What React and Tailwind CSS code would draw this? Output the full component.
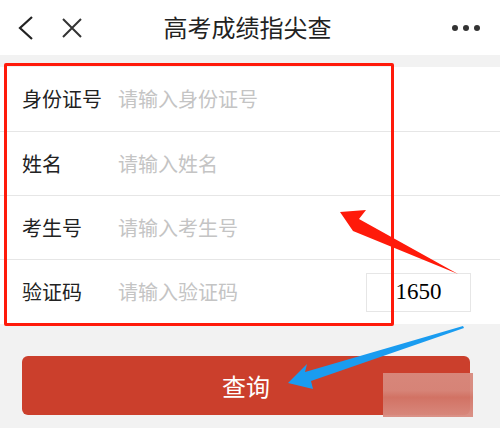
import React from "react";

const rows = [
  { label: "身份证号", placeholder: "请输入身份证号" },
  { label: "姓名", placeholder: "请输入姓名" },
  { label: "考生号", placeholder: "请输入考生号" },
  { label: "验证码", placeholder: "请输入验证码", captcha: "1650" },
];

const App = () => {
  return (
    <div
      className="relative w-[500px] h-[428px] overflow-hidden bg-[#f2f2f2]"
      style={{ fontFamily: '"Noto Sans CJK SC", "Noto Sans", sans-serif' }}
    >
      {/* header */}
      <div className="h-[55px] bg-white flex items-center px-[16px]">
        <svg width="18" height="26" viewBox="0 0 18 26" className="ml-[1px]">
          <path d="M15 2 L3 13 L15 24" fill="none" stroke="#222" strokeWidth="2.2" />
        </svg>
        <svg width="22" height="22" viewBox="0 0 22 22" className="ml-[26px]">
          <path d="M2 2 L20 20 M20 2 L2 20" fill="none" stroke="#333" strokeWidth="2" />
        </svg>
        <div className="flex-1 text-center text-[24px] text-[#222] pr-[40px] -mt-[2px]">
          高考成绩指尖查
        </div>
        <div className="flex gap-[5px] mr-[4px]">
          <span className="w-[6px] h-[6px] rounded-full bg-[#333]" />
          <span className="w-[6px] h-[6px] rounded-full bg-[#333]" />
          <span className="w-[6px] h-[6px] rounded-full bg-[#333]" />
        </div>
      </div>

      {/* form */}
      <div className="mt-[12px] bg-white">
        {rows.map((r, i) => (
          <div
            key={r.label}
            className={`flex items-center ${i === 0 ? "h-[65px]" : "h-[64px]"} ${
              i < rows.length - 1 ? "border-b border-[#e6e6e6]" : ""
            }`}
          >
            <div className="w-[118px] pl-[22px] text-[20px] text-[#222] shrink-0">{r.label}</div>
            <div className="flex-1 text-[20px] text-[#c4c4c4]">{r.placeholder}</div>
            {r.captcha && (
              <div
                className="w-[105px] h-[39px] mr-[29px] border border-[#e6e6e6] flex items-center justify-center text-[23px] text-black"
                style={{ fontFamily: '"Liberation Serif", serif' }}
              >
                {r.captcha}
              </div>
            )}
          </div>
        ))}
      </div>

      {/* button */}
      <div className="mt-[32px] mx-[22px] w-[448px] h-[59px] rounded-[6px] bg-[#cb3f2c] flex items-center justify-center text-white text-[24px]">
        查询
      </div>

      {/* red highlight box */}
      <div className="absolute left-[4px] top-[63px] w-[390px] h-[263px] border-[3px] border-[#ff1a0a] rounded-[2px]" />

      {/* mosaic */}
      <div className="absolute left-[383px] top-[373px] w-[90px] h-[44px] bg-[linear-gradient(180deg,#d88a7e,#d7877b_40%,#d27567_55%,#d98d82)] opacity-95" />

      {/* arrows */}
      <svg className="absolute left-0 top-0" width="500" height="428" viewBox="0 0 500 428">
        <path d="M340 212 L366 210 L359 219 L458 274 L353 231 Z" fill="#ff1a0a" />
        <path d="M288 383 L307 364 L305 372 L463 326 L464 328 L311 381 L313 389 Z" fill="#1a9cf0" />
      </svg>
    </div>
  );
};

export default App;
